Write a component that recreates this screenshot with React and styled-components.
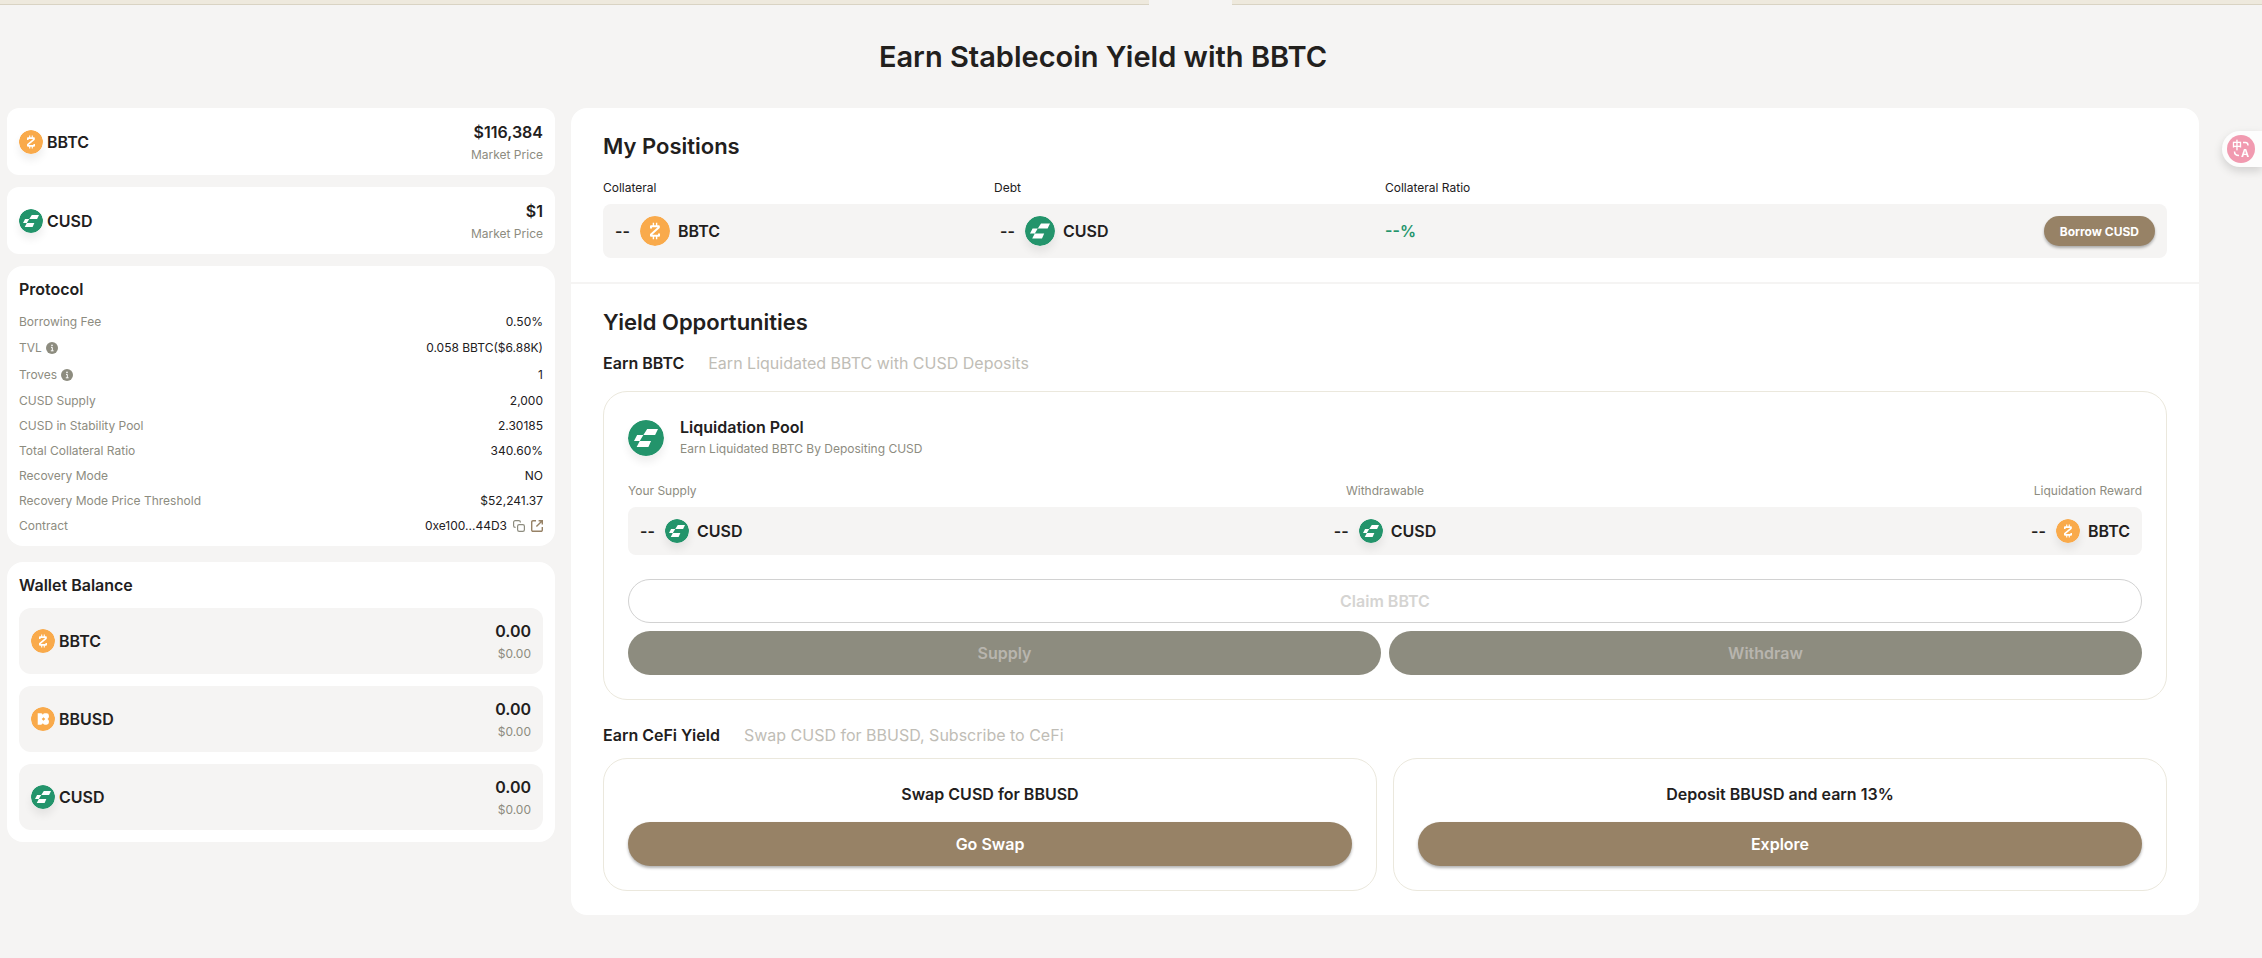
import React from "react";
import styled, { createGlobalStyle } from "styled-components";

const protocol = [
  { label: "Borrowing Fee", value: "0.50%" },
  { label: "TVL", value: "0.058 BBTC($6.88K)", info: true },
  { label: "Troves", value: "1", info: true },
  { label: "CUSD Supply", value: "2,000" },
  { label: "CUSD in Stability Pool", value: "2.30185" },
  { label: "Total Collateral Ratio", value: "340.60%" },
  { label: "Recovery Mode", value: "NO" },
  { label: "Recovery Mode Price Threshold", value: "$52,241.37" },
  { label: "Contract", value: "0xe100...44D3", contract: true },
];

const markets = [
  { token: "BBTC", price: "$116,384" },
  { token: "CUSD", price: "$1" },
];

const wallet = [
  { token: "BBTC", flat: true },
  { token: "BBUSD", flat: true },
  { token: "CUSD" },
];

const marks = {
  BBTC: (
    <>
      <circle cx="15" cy="15" r="15" fill="#f9aa4b" />
      <path
        d="M11 12.6V10.2H18.8V11.6L11 18.4V19.8H19V17.4"
        fill="none"
        stroke="#fff"
        strokeWidth="2"
        strokeLinejoin="round"
      />
      <path
        d="M13.4 6.8V10M16.6 6.8V10M13.4 20V23.2M16.6 20V23.2"
        stroke="#fff"
        strokeWidth="1.4"
      />
    </>
  ),
  BBUSD: (
    <>
      <circle cx="15" cy="15" r="15" fill="#f9aa4b" />
      <path
        d="M8.4 7.8H12.4Q14 7.8 14.8 9.6Q15.6 7.8 17.2 7.8H19.4Q22.4 7.8 22.4 10.8V12.2Q22.4 14 20.6 15Q22.4 16 22.4 17.8V19.2Q22.4 22.2 19.4 22.2H17.2Q15.6 22.2 14.8 20.4Q14 22.2 12.4 22.2H8.4Z"
        fill="#fff"
      />
      <path d="M15.6 12.8L17.8 15L15.6 17.2L13.4 15Z" fill="#f9aa4b" />
    </>
  ),
  CUSD: (
    <>
      <circle cx="15" cy="15" r="15" fill="#23946b" />
      <path
        d="M16 7.5H25L22.6 12.5H12.8ZM7.6 12.5H12.8L9.8 17.5H5ZM9.8 17.5H19.2L17 22.5H7.2Z"
        fill="#fff"
      />
    </>
  ),
};

const Token = ({ name, size = 24, flat }) => (
  <TokenIcon viewBox="0 0 30 30" $size={size} $flat={flat} aria-hidden="true">
    {marks[name]}
  </TokenIcon>
);

const Balance = ({ name, size, flat }) => (
  <BalanceWrap>
    <Amount>--</Amount>
    <Token name={name} size={size} flat={flat} />
    <span>{name}</span>
  </BalanceWrap>
);

const InfoIcon = () => (
  <SmallIcon viewBox="0 0 12 12" aria-hidden="true">
    <circle cx="6" cy="6" r="6" fill="#8d8c7f" />
    <path d="M5 5.4H6.3V8.8M4.8 8.8H7.6" stroke="#fff" fill="none" />
    <circle cx="6" cy="3.4" r="0.8" fill="#fff" />
  </SmallIcon>
);

const CopyIcon = () => (
  <SmallIcon viewBox="0 0 12 12" fill="none" stroke="#8d8c7f" strokeWidth="1.2" aria-hidden="true">
    <rect x="4.6" y="4.6" width="6.8" height="6.8" rx="1.6" />
    <path d="M2.6 7.4H2.2A1.6 1.6 0 0 1 .6 5.8V2.2A1.6 1.6 0 0 1 2.2.6H5.8A1.6 1.6 0 0 1 7.4 2.2V2.6" />
  </SmallIcon>
);

const OpenIcon = () => (
  <SmallIcon viewBox="0 0 12 12" fill="none" stroke="#978266" strokeWidth="1.4" aria-hidden="true">
    <path d="M5 .7H2A1.3 1.3 0 0 0 .7 2V10A1.3 1.3 0 0 0 2 11.3H10A1.3 1.3 0 0 0 11.3 10V7" />
    <path d="M7.6.7H11.3V4.4M11.3.7L5.4 6.6" />
  </SmallIcon>
);

const App = () => {
  return (
    <>
      <GlobalStyle />
      <TopBar>
        <TabStrip />
        <span />
        <TabStrip />
      </TopBar>
      <Page>
        <Title>Earn Stablecoin Yield with BBTC</Title>
        <Columns>
          <Sidebar>
            {markets.map((item) => (
              <MarketCard key={item.token}>
                <TokenName>
                  <Token name={item.token} />
                  {item.token}
                </TokenName>
                <Figures>
                  <strong>{item.price}</strong>
                  <span>Market Price</span>
                </Figures>
              </MarketCard>
            ))}
            <SideCard>
              <SideTitle>Protocol</SideTitle>
              <Stats>
                {protocol.map((row) => (
                  <StatRow key={row.label} $tall={row.info}>
                    <dt>
                      {row.label}
                      {row.info && <InfoIcon />}
                    </dt>
                    <dd>
                      {row.value}
                      {row.contract && (
                        <>
                          <IconButton type="button" aria-label="Copy contract address">
                            <CopyIcon />
                          </IconButton>
                          <IconLink href="#contract" aria-label="Open contract in explorer">
                            <OpenIcon />
                          </IconLink>
                        </>
                      )}
                    </dd>
                  </StatRow>
                ))}
              </Stats>
            </SideCard>
            <WalletCard>
              <SideTitle>Wallet Balance</SideTitle>
              <WalletList>
                {wallet.map((item) => (
                  <WalletRow key={item.token}>
                    <TokenName>
                      <Token name={item.token} flat={item.flat} />
                      {item.token}
                    </TokenName>
                    <Figures>
                      <strong>0.00</strong>
                      <span>$0.00</span>
                    </Figures>
                  </WalletRow>
                ))}
              </WalletList>
            </WalletCard>
          </Sidebar>

          <Main>
            <Section>
              <SectionTitle>My Positions</SectionTitle>
              <Positions>
                <thead>
                  <tr>
                    <th>Collateral</th>
                    <th>Debt</th>
                    <th>Collateral Ratio</th>
                    <th aria-label="Action" />
                  </tr>
                </thead>
                <tbody>
                  <tr>
                    <td>
                      <Balance name="BBTC" size={30} flat />
                    </td>
                    <td>
                      <Balance name="CUSD" size={30} />
                    </td>
                    <td>
                      <Ratio>--%</Ratio>
                    </td>
                    <td>
                      <BorrowButton type="button">Borrow CUSD</BorrowButton>
                    </td>
                  </tr>
                </tbody>
              </Positions>
            </Section>
            <Section>
              <SectionTitle>Yield Opportunities</SectionTitle>
              <SubHead>
                <h3>Earn BBTC</h3>
                <p>Earn Liquidated BBTC with CUSD Deposits</p>
              </SubHead>
              <Card>
                <PoolHead>
                  <Token name="CUSD" size={36} />
                  <div>
                    <h4>Liquidation Pool</h4>
                    <p>Earn Liquidated BBTC By Depositing CUSD</p>
                  </div>
                </PoolHead>
                <PoolTable>
                  <thead>
                    <tr>
                      <th>Your Supply</th>
                      <th>Withdrawable</th>
                      <th>Liquidation Reward</th>
                    </tr>
                  </thead>
                  <tbody>
                    <tr>
                      <td>
                        <Balance name="CUSD" />
                      </td>
                      <td>
                        <Balance name="CUSD" />
                      </td>
                      <td>
                        <Balance name="BBTC" />
                      </td>
                    </tr>
                  </tbody>
                </PoolTable>
                <Actions>
                  <OutlineButton type="button" disabled>
                    Claim BBTC
                  </OutlineButton>
                  <Button type="button" disabled>
                    Supply
                  </Button>
                  <Button type="button" disabled>
                    Withdraw
                  </Button>
                </Actions>
              </Card>
              <SubHead $spaced>
                <h3>Earn CeFi Yield</h3>
                <p>Swap CUSD for BBUSD, Subscribe to CeFi</p>
              </SubHead>
              <Offers>
                <Offer>
                  <h4>Swap CUSD for BBUSD</h4>
                  <Button type="button">Go Swap</Button>
                </Offer>
                <Offer>
                  <h4>Deposit BBUSD and earn 13%</h4>
                  <Button type="button">Explore</Button>
                </Offer>
              </Offers>
            </Section>
          </Main>
        </Columns>
      </Page>
      <TranslateTab type="button" aria-label="Translate page">
        <svg viewBox="0 0 28 28" aria-hidden="true">
          <circle cx="14" cy="14" r="14" fill="#f19ab0" />
          <text x="5" y="14" fontSize="10" fontWeight="700" fill="#fff">
            中
          </text>
          <text x="14" y="22" fontSize="11" fontWeight="700" fill="#fff">
            A
          </text>
          <path
            d="M16 7.5H18.5Q21 7.5 21 10.5M7.5 16.5Q7.5 20.5 12 20.5"
            fill="none"
            stroke="#fff"
            strokeWidth="1.5"
          />
        </svg>
      </TranslateTab>
    </>
  );
};

const GlobalStyle = createGlobalStyle`
  * {
    box-sizing: border-box;
    margin: 0;
    padding: 0;
  }

  body {
    background: #f5f4f3;
    color: #22201d;
    font-family: Inter, "Noto Sans CJK SC", sans-serif;
    font-size: 16px;
    line-height: 22px;
  }

  button {
    font-family: inherit;
    border: none;
    cursor: pointer;
  }
`;

const TopBar = styled.div`
  display: grid;
  grid-template-columns: 1149fr 83px 1030fr;
`;

const TabStrip = styled.div`
  height: 5px;
  background: #eee9dd;
  border-bottom: 1px solid #d9d3c3;
`;

const Page = styled.div`
  padding: 32px 63px 43px 7px;
`;

const Title = styled.h1`
  font-size: 29px;
  font-weight: 600;
  line-height: 40px;
  text-align: center;
  margin-bottom: 31px;
`;

const Columns = styled.div`
  display: grid;
  grid-template-columns: 1fr 3fr;
  align-items: start;
`;

const Sidebar = styled.aside`
  display: flex;
  flex-direction: column;
  gap: 12px;
`;

const MarketCard = styled.section`
  display: flex;
  justify-content: space-between;
  align-items: center;
  min-height: 67px;
  padding: 0 12px;
  background: #fff;
  border-radius: 12px;
`;

const SideCard = styled.section`
  padding: 12px;
  background: #fff;
  border-radius: 16px;
`;

const WalletCard = styled(SideCard)`
  margin-top: 4px;
`;

const SideTitle = styled.h2`
  font-size: 16px;
  font-weight: 600;
  line-height: 22px;
`;

const Stats = styled.dl`
  display: flex;
  flex-direction: column;
  gap: 8px;
  margin-top: 13px;
`;

const StatRow = styled.div`
  display: flex;
  justify-content: space-between;
  font-size: 12px;
  line-height: ${(p) => (p.$tall ? "19px" : "17px")};

  dt,
  dd {
    display: flex;
    align-items: center;
  }

  dt {
    gap: 4px;
    color: #8d8c7f;
  }

  dd {
    gap: 6px;
  }
`;

const SmallIcon = styled.svg`
  display: block;
  width: 12px;
  height: 12px;
  overflow: visible;
`;

const IconButton = styled.button`
  background: none;
`;

const IconLink = styled.a`
  display: block;
`;

const TokenIcon = styled.svg`
  flex: none;
  display: block;
  width: ${(p) => p.$size}px;
  height: ${(p) => p.$size}px;
  border-radius: 50%;
  box-shadow: ${(p) => (p.$flat ? "none" : "0 6px 8px rgba(0, 0, 0, 0.07)")};
`;

const TokenName = styled.div`
  display: flex;
  align-items: center;
  gap: 4px;
  font-weight: 600;
`;

const Figures = styled.div`
  display: flex;
  flex-direction: column;
  align-items: flex-end;
  gap: 4px;

  strong {
    font-weight: 600;
    line-height: 22px;
  }

  span {
    font-size: 12px;
    line-height: 16px;
    color: #8d8c7f;
  }
`;

const WalletList = styled.div`
  display: flex;
  flex-direction: column;
  gap: 12px;
  margin-top: 12px;
`;

const WalletRow = styled.div`
  display: flex;
  justify-content: space-between;
  align-items: center;
  padding: 12px;
  background: #f5f4f3;
  border-radius: 12px;
`;

const Main = styled.main`
  margin-left: 16px;
  background: #fff;
  border-radius: 16px;
`;

const Section = styled.section`
  padding: 24px 32px;

  & + & {
    border-top: 2px solid #f5f4f3;
  }
`;

const SectionTitle = styled.h2`
  font-size: 22px;
  font-weight: 600;
  line-height: 28px;
`;

const DataTable = styled.table`
  display: block;

  thead,
  tbody {
    display: block;
  }

  tr {
    display: grid;
    align-items: center;
  }

  th {
    font-size: 12px;
    font-weight: 400;
    line-height: 16px;
    text-align: left;
  }

  tbody tr {
    margin-top: 8px;
    padding: 12px;
    background: #f5f4f3;
    border-radius: 8px;
  }
`;

const Positions = styled(DataTable)`
  margin-top: 20px;

  tr {
    grid-template-columns: repeat(4, 1fr);
  }

  td:last-child {
    justify-self: end;
  }
`;

const PoolTable = styled(DataTable)`
  margin-top: 23px;

  tr {
    grid-template-columns: repeat(3, 1fr);
  }

  th {
    color: #8d8c7f;
  }

  th:nth-child(2),
  td:nth-child(2) {
    justify-self: center;
  }

  th:last-child,
  td:last-child {
    justify-self: end;
  }
`;

const BalanceWrap = styled.div`
  display: flex;
  align-items: center;
  gap: 8px;
  font-weight: 600;
`;

const Amount = styled.span`
  min-width: 17px;
`;

const Ratio = styled.span`
  display: block;
  font-weight: 600;
  color: #23946b;
`;

const SubHead = styled.div`
  display: flex;
  gap: 24px;
  margin-top: ${(p) => (p.$spaced ? 24 : 16)}px;
  line-height: 23px;

  h3 {
    font-size: 16px;
    font-weight: 600;
  }

  p {
    color: #bfbdb6;
  }
`;

const Card = styled.div`
  margin-top: 16px;
  padding: 24px;
  border: 1px solid #ebe8dd;
  border-radius: 24px;
`;

const PoolHead = styled.div`
  display: flex;
  align-items: center;
  gap: 16px;

  h4 {
    font-size: 16px;
    font-weight: 600;
    line-height: 22px;
  }

  p {
    font-size: 12px;
    line-height: 22px;
    color: #8d8c7f;
  }
`;

const Actions = styled.div`
  display: grid;
  grid-template-columns: 1fr 1fr;
  gap: 8px;
  margin-top: 24px;
`;

const Button = styled.button`
  height: 44px;
  border-radius: 22px;
  background: #978266;
  color: #fff;
  font-size: 16px;
  font-weight: 600;
  box-shadow: 0 2px 3px rgba(0, 0, 0, 0.3);

  &:disabled {
    background: #8d8c7f;
    color: #b8b5ae;
    box-shadow: none;
    cursor: default;
  }
`;

const OutlineButton = styled(Button)`
  grid-column: 1 / -1;

  &:disabled {
    background: #fff;
    color: #d5d4d2;
    border: 1px solid #d2d2d2;
  }
`;

const BorrowButton = styled(Button)`
  display: block;
  height: 30px;
  padding: 0 16px;
  font-size: 12px;
  font-weight: 700;
`;

const Offers = styled.div`
  display: grid;
  grid-template-columns: 1fr 1fr;
  gap: 16px;
  margin-top: 11px;
`;

const Offer = styled(Card)`
  display: flex;
  flex-direction: column;
  gap: 16px;
  margin-top: 0;
  text-align: center;

  h4 {
    font-size: 16px;
    font-weight: 600;
    line-height: 23px;
  }
`;

const TranslateTab = styled.button`
  position: fixed;
  top: 131px;
  right: 0;
  padding: 4px 7px 4px 5px;
  background: #fdfdfd;
  border-radius: 18px 0 0 18px;
  box-shadow: 0 4px 10px rgba(0, 0, 0, 0.15);

  svg {
    display: block;
    width: 28px;
    height: 28px;
  }
`;

export default App;
